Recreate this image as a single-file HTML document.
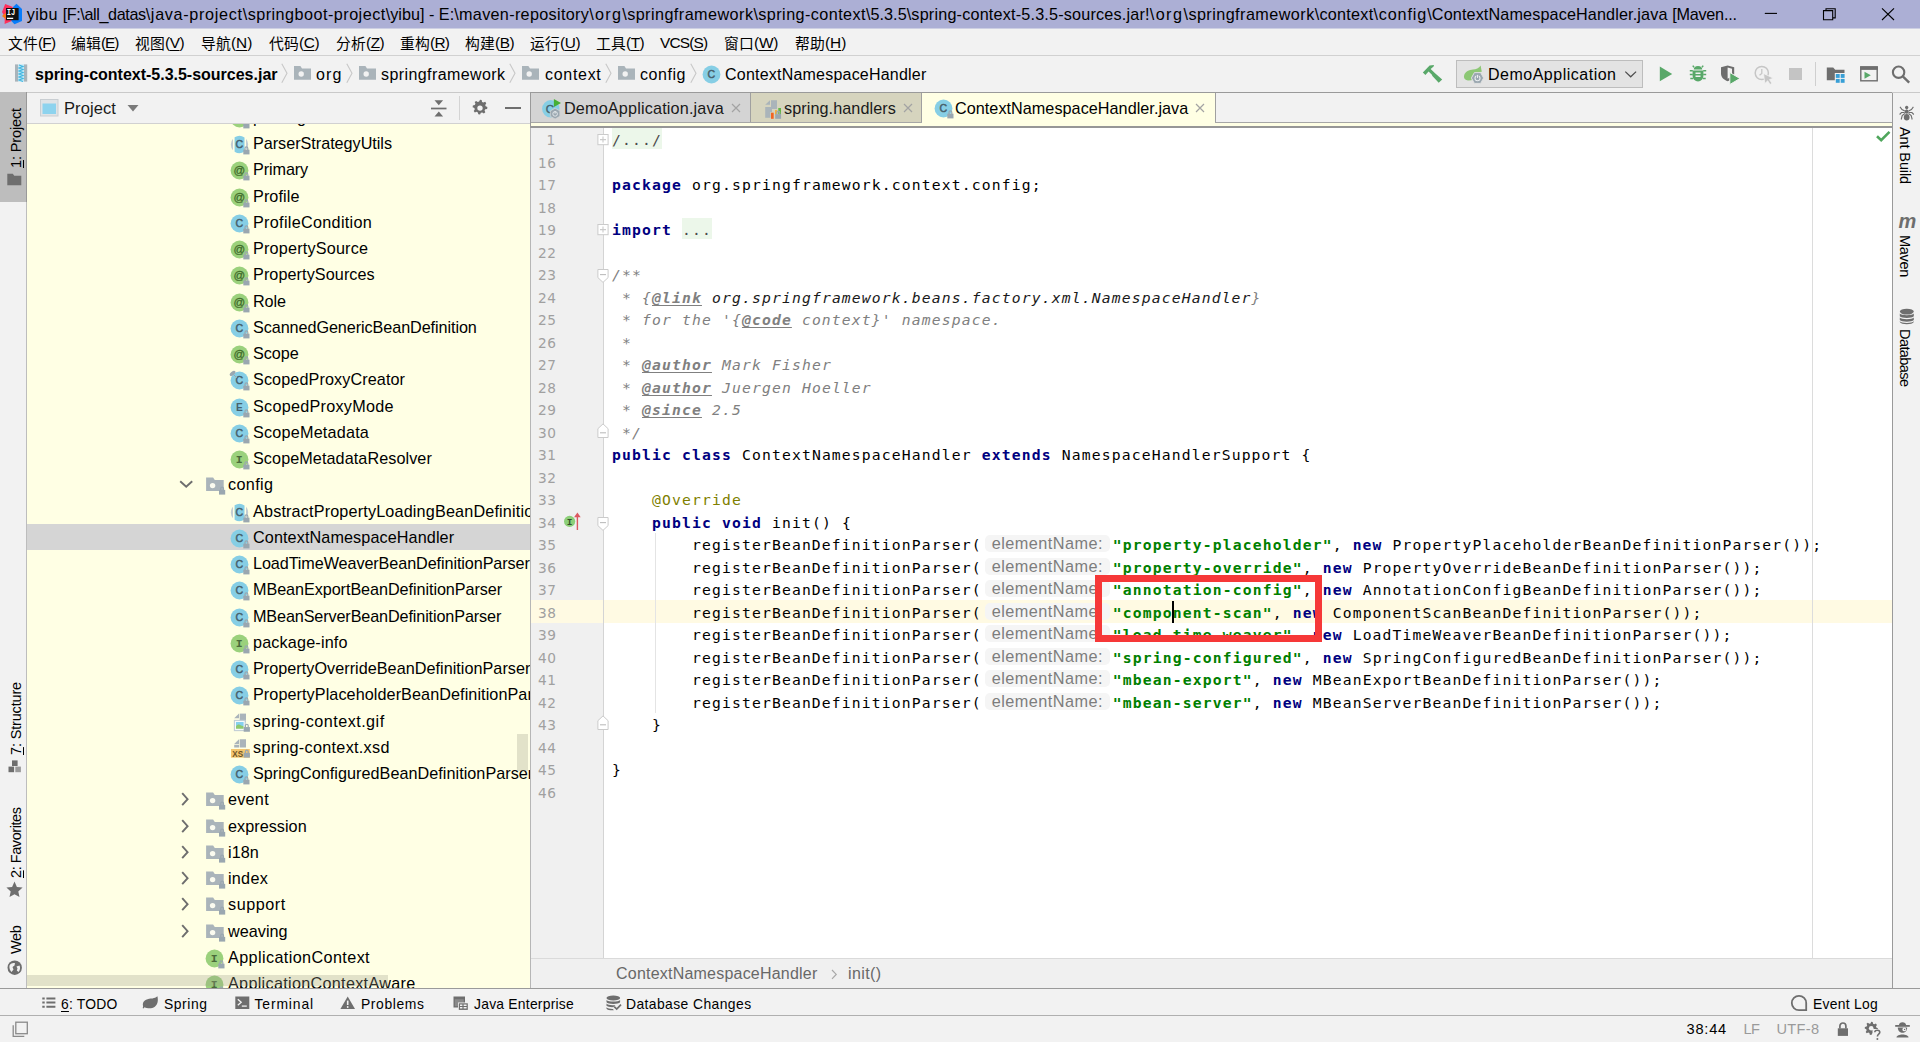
<!DOCTYPE html>
<html lang="zh"><head><meta charset="utf-8"><title>yibu - ContextNamespaceHandler.java</title>
<style>
html,body{margin:0;padding:0;background:#f2f2f2;}
body{width:1920px;height:1042px;overflow:hidden;font-family:"Liberation Sans","Noto Sans CJK SC",sans-serif;font-size:16px;color:#000;}
#app{position:relative;width:1920px;height:1042px;overflow:hidden;background:#f2f2f2;}
#app div,#app svg,#app span.t{position:absolute;}
span.t{white-space:pre;}
u{text-decoration:underline;text-underline-offset:2px;}
.clip{overflow:hidden;}
.c{font-family:"DejaVu Sans Mono","Liberation Mono",monospace;font-size:14.7px;letter-spacing:1.151px;line-height:23px;color:#000;}
.c b{font-weight:700;}
.k{color:#000080;}
.s{color:#008000;}
.a{color:#808000;}
.d{color:#808080;font-style:italic;}
.dt{text-decoration:underline;text-underline-offset:2px;}
.dl{color:#1a1a1a;}
.f{background:#ecf7ea;color:#4a4a4a;padding:3.4px 0 1.2px;}
.h{display:inline-block;font-style:normal;font-family:"Liberation Sans",sans-serif;font-size:16.3px;letter-spacing:0.45px;color:#7d7d7d;background:#f5f5f5;border-radius:5px;width:125px;height:17.5px;line-height:17.5px;margin:0 3px 0 3px;text-align:center;vertical-align:1.5px;text-indent:0;}
#app svg{overflow:visible;}

</style></head>
<body>
<div id="app">
<div style="left:0px;top:0px;width:1920px;height:29px;background:#acafd5;"></div>
<div style="left:0px;top:28px;width:1920px;height:1px;background:#cdcfe3;"></div>
<div style="left:0px;top:29px;width:1920px;height:26px;background:#f2f2f2;"></div>
<div style="left:0px;top:55px;width:1920px;height:1px;background:#d1d1d1;"></div>
<div style="left:0px;top:56px;width:1920px;height:36px;background:#f2f2f2;"></div>
<div style="left:0px;top:92px;width:1920px;height:1px;background:#c9c9c9;"></div>
<div style="left:0px;top:93px;width:27px;height:895px;background:#f2f2f2;"></div>
<div style="left:0px;top:92px;width:27px;height:110px;background:#bdbdbd;"></div>
<div style="left:26px;top:93px;width:1px;height:895px;background:#bdbdbd;"></div>
<div style="left:26px;top:92px;width:1px;height:110px;background:#999;"></div>
<div style="left:27px;top:93px;width:503px;height:30px;background:#f2f2f2;"></div>
<div style="left:27px;top:123px;width:503px;height:1px;background:#d1d1d1;"></div>
<div style="left:27px;top:124px;width:503px;height:864px;background:#ffffe4;"></div>
<div style="left:530px;top:92px;width:1362px;height:1px;background:#9a9a9a;"></div>
<div style="left:530px;top:93px;width:1362px;height:29px;background:#f2f2f2;"></div>
<div style="left:530px;top:122px;width:1362px;height:1px;background:#a6a6a6;"></div>
<div style="left:530px;top:123px;width:1362px;height:3px;background:#ffffe4;"></div>
<div style="left:530px;top:126px;width:1362px;height:2px;background:#969696;"></div>
<div style="left:531px;top:128px;width:1361px;height:830px;background:#fff;"></div>
<div style="left:531px;top:128px;width:72px;height:830px;background:#f0f0f0;"></div>
<div style="left:603px;top:128px;width:1px;height:830px;background:#d4d4d4;"></div>
<div style="left:530px;top:92px;width:1px;height:36px;background:#9a9a9a;"></div>
<div style="left:530px;top:128px;width:1px;height:860px;background:#b6b6b6;"></div>
<div style="left:1812px;top:128px;width:1px;height:830px;background:#dcdcdc;"></div>
<div style="left:531px;top:958px;width:1361px;height:30px;background:#f0f0f0;"></div>
<div style="left:531px;top:958px;width:1361px;height:1px;background:#dadada;"></div>
<div style="left:1892px;top:93px;width:28px;height:895px;background:#f2f2f2;"></div>
<div style="left:1892px;top:93px;width:1px;height:895px;background:#9a9a9a;"></div>
<div style="left:0px;top:988px;width:1920px;height:1px;background:#9a9a9a;"></div>
<div style="left:0px;top:989px;width:1920px;height:26px;background:#f2f2f2;"></div>
<div style="left:0px;top:1015px;width:1920px;height:1px;background:#b0b0b0;"></div>
<div style="left:0px;top:1016px;width:1920px;height:26px;background:#f2f2f2;"></div>
<span class="t" style="left:26.7px;top:5px;line-height:18px;font-size:16.2px;letter-spacing:0.359px;">yibu </span>
<span class="t" style="left:62.7px;top:5px;line-height:18px;font-size:16.2px;letter-spacing:-0.399px;">[F:\all_datas</span>
<span class="t" style="left:145.7px;top:5px;line-height:18px;font-size:16.2px;letter-spacing:0.679px;">\java-project</span>
<span class="t" style="left:242.7px;top:5px;line-height:18px;font-size:16.2px;letter-spacing:0.470px;">\springboot-project</span>
<span class="t" style="left:385.7px;top:5px;line-height:18px;font-size:16.2px;letter-spacing:0.011px;">\yibu] - E:</span>
<span class="t" style="left:454.2px;top:5px;line-height:18px;font-size:16.2px;letter-spacing:0.320px;">\maven-repository</span>
<span class="t" style="left:589.2px;top:5px;line-height:18px;font-size:16.2px;letter-spacing:1.273px;">\org</span>
<span class="t" style="left:622.2px;top:5px;line-height:18px;font-size:16.2px;letter-spacing:0.443px;">\springframework</span>
<span class="t" style="left:753.45px;top:5px;line-height:18px;font-size:16.2px;letter-spacing:0.422px;">\spring-context</span>
<span class="t" style="left:865.95px;top:5px;line-height:18px;font-size:16.2px;letter-spacing:0.039px;">\5.3.5</span>
<span class="t" style="left:906.7px;top:5px;line-height:18px;font-size:16.2px;letter-spacing:0.188px;">\spring-context-5.3.5-sources.jar!</span>
<span class="t" style="left:1149.7px;top:5px;line-height:18px;font-size:16.2px;letter-spacing:1.461px;">\org</span>
<span class="t" style="left:1183.45px;top:5px;line-height:18px;font-size:16.2px;letter-spacing:0.443px;">\springframework</span>
<span class="t" style="left:1314.7px;top:5px;line-height:18px;font-size:16.2px;letter-spacing:0.256px;">\context</span>
<span class="t" style="left:1373.45px;top:5px;line-height:18px;font-size:16.2px;letter-spacing:0.864px;">\config</span>
<span class="t" style="left:1427.2px;top:5px;line-height:18px;font-size:16.2px;letter-spacing:0.128px;">\ContextNamespaceHandler.java </span>
<span class="t" style="left:1672.2px;top:5px;line-height:18px;font-size:16.2px;letter-spacing:-0.231px;">[Maven...</span>
<svg style="left:0px;top:0px;" width="26" height="28" viewBox="0 0 26 28"><path d="M5.200 4L12.800 7L11.800 21L4.600 24L4.800 17L2 12z" fill="#fe315d"/><path d="M2 16L5.800 12.800V19.200z" fill="#f97a12"/><path d="M16.500 3.800L22 9V21L14.500 24.300L11.300 21L13 7z" fill="#087cfa"/><rect x="6" y="8" width="12.600" height="12.200" fill="#111"/><text x="6.800" y="15" font-family="Liberation Mono,monospace" font-size="8.500" font-weight="700" fill="#fff" textLength="8.500" lengthAdjust="spacingAndGlyphs">IJ</text><rect x="7" y="17.700" width="6.200" height="1.300" fill="#fff"/></svg>
<svg style="left:1760px;top:5px;" width="22" height="18" viewBox="0 0 22 18"><path d="M4.800 8.400H17" stroke="#000" stroke-width="1.100"/></svg>
<svg style="left:1820px;top:5px;" width="20" height="18" viewBox="0 0 20 18"><path d="M3.500 5.600h9.200v9.200h-9.200z M6 5.600V3.700h9.200v9.200h-2.500" fill="none" stroke="#000" stroke-width="1.100"/></svg>
<svg style="left:1878px;top:5px;" width="20" height="18" viewBox="0 0 20 18"><path d="M4 3.300L16 15M16 3.300L4 15" stroke="#000" stroke-width="1.100"/></svg>
<span class="t" style="left:8px;top:34px;line-height:17px;font-size:15.4px;letter-spacing:-0.822px"><span style="font-size:14.8px;letter-spacing:0.2px;position:relative;top:1px">文件</span>(<u>F</u>)</span>
<span class="t" style="left:71px;top:34px;line-height:17px;font-size:15.4px;letter-spacing:-1.114px"><span style="font-size:14.8px;letter-spacing:0.2px;position:relative;top:1px">编辑</span>(<u>E</u>)</span>
<span class="t" style="left:135px;top:34px;line-height:17px;font-size:15.4px;letter-spacing:-0.447px"><span style="font-size:14.8px;letter-spacing:0.2px;position:relative;top:1px">视图</span>(<u>V</u>)</span>
<span class="t" style="left:201px;top:34px;line-height:17px;font-size:15.4px;letter-spacing:-0.061px"><span style="font-size:14.8px;letter-spacing:0.2px;position:relative;top:1px">导航</span>(<u>N</u>)</span>
<span class="t" style="left:269px;top:34px;line-height:17px;font-size:15.4px;letter-spacing:-0.395px"><span style="font-size:14.8px;letter-spacing:0.2px;position:relative;top:1px">代码</span>(<u>C</u>)</span>
<span class="t" style="left:336px;top:34px;line-height:17px;font-size:15.4px;letter-spacing:-0.489px"><span style="font-size:14.8px;letter-spacing:0.2px;position:relative;top:1px">分析</span>(<u>Z</u>)</span>
<span class="t" style="left:400px;top:34px;line-height:17px;font-size:15.4px;letter-spacing:-0.728px"><span style="font-size:14.8px;letter-spacing:0.2px;position:relative;top:1px">重构</span>(<u>R</u>)</span>
<span class="t" style="left:465px;top:34px;line-height:17px;font-size:15.4px;letter-spacing:-0.447px"><span style="font-size:14.8px;letter-spacing:0.2px;position:relative;top:1px">构建</span>(<u>B</u>)</span>
<span class="t" style="left:530px;top:34px;line-height:17px;font-size:15.4px;letter-spacing:-0.395px"><span style="font-size:14.8px;letter-spacing:0.2px;position:relative;top:1px">运行</span>(<u>U</u>)</span>
<span class="t" style="left:596px;top:34px;line-height:17px;font-size:15.4px;letter-spacing:-0.489px"><span style="font-size:14.8px;letter-spacing:0.2px;position:relative;top:1px">工具</span>(<u>T</u>)</span>
<span class="t" style="left:660px;top:34px;line-height:17px;font-size:15.4px;letter-spacing:-0.831px">VCS(<u>S</u>)</span>
<span class="t" style="left:724px;top:34px;line-height:17px;font-size:15.4px;letter-spacing:-0.197px"><span style="font-size:14.8px;letter-spacing:0.2px;position:relative;top:1px">窗口</span>(<u>W</u>)</span>
<span class="t" style="left:795px;top:34px;line-height:17px;font-size:15.4px;letter-spacing:-0.061px"><span style="font-size:14.8px;letter-spacing:0.2px;position:relative;top:1px">帮助</span>(<u>H</u>)</span>
<span class="t" style="left:35px;top:66px;line-height:17px;font-size:16px;letter-spacing:-0.008px;font-weight:700;">spring-context-5.3.5-sources.jar</span>
<span class="t" style="left:316px;top:66px;line-height:17px;font-size:16px;letter-spacing:1.125px;">org</span>
<span class="t" style="left:381px;top:66px;line-height:17px;font-size:16px;letter-spacing:0.416px;">springframework</span>
<span class="t" style="left:545px;top:66px;line-height:17px;font-size:16px;letter-spacing:0.701px;">context</span>
<span class="t" style="left:640px;top:66px;line-height:17px;font-size:16px;letter-spacing:0.549px;">config</span>
<span class="t" style="left:725px;top:66px;line-height:17px;font-size:16px;letter-spacing:0.215px;">ContextNamespaceHandler</span>

<svg style="left:40px;top:99px;" width="19" height="18" viewBox="0 0 19 18"><rect x="0.5" y="0.5" width="17.5" height="16.5" fill="#dfe3e6" stroke="#c9ced2"/><rect x="2.5" y="4.5" width="13.5" height="10.5" fill="#8dd3ee"/></svg>
<span class="t" style="left:64px;top:99px;line-height:18px;font-size:16.5px;letter-spacing:0.092px;color:#1a1a1a;">Project</span>
<svg style="left:127px;top:104px;" width="12" height="8" viewBox="0 0 12 8"><path d="M0.5 1h11L6 7.5z" fill="#7a7a7a"/></svg>
<svg style="left:430px;top:98px;" width="18" height="20" viewBox="0 0 18 20"><path d="M1 10.5H16.5" stroke="#6e6e6e" stroke-width="1.7"/><path d="M4.5 2.2h8.6L8.8 7.2z M4.5 18.6h8.6L8.8 13.6z" fill="#6e6e6e"/></svg>
<div style="left:459px;top:96px;width:1px;height:24px;background:#d4d4d4;"></div>
<svg style="left:470px;top:98px;" width="20" height="20" viewBox="0 0 20 20"><path d="M10 1.6l1.9.3.5 2.2 1.5.8 2.1-.9 1.3 1.7-1.2 1.9.4 1.6 2.1.9-.3 2.1-2.2.5-.8 1.5.9 2-1.7 1.3-1.9-1.2-1.6.4-.9 2.1-2.1-.3-.5-2.2-1.5-.8-2 .9-1.300-1.7 1.2-1.9-.4-1.600-2.100-.9.3-2.100 2.200-.5.8-1.500-.9-2 1.700-1.300 1.900 1.200 1.600-.4z" fill="#6e6e6e" transform="translate(1.400,0.400) scale(0.860)"/><circle cx="10" cy="10.100" r="2.700" fill="#f2f2f2"/></svg>
<div style="left:505px;top:107px;width:16px;height:2px;background:#6e6e6e;"></div>
<div class="clip" style="left:27px;top:124px;width:503px;height:864px">
<div style="left:0px;top:400px;width:503px;height:26.25px;background:#d5d5d5;"></div>
<svg style="left:204.4px;top:-14.50px" width="20" height="20"><circle cx="8.500" cy="8.500" r="8.900" fill="#9bd17c"/><text x="8.300" y="12.300" text-anchor="middle" font-family="Liberation Mono,monospace" font-size="11.500" font-weight="700" fill="#4a6a3a">I</text><g transform="translate(12.300,9.800)"><path d="M1.700 4.200V2.500a1.400 1.400 0 0 1 2.800 0V4.200" fill="none" stroke="#9aa7b0" stroke-width="1.200"/><rect x="0" y="3.900" width="6.200" height="4.700" fill="#9aa7b0"/></g></svg>
<span class="t" style="left:226px;top:-16px;line-height:18px;font-size:16.2px;letter-spacing:0.166px;">package-info</span>
<svg style="left:204.4px;top:11.50px" width="20" height="20"><path d="M2 2.720A8.700 8.700 0 0 0 2 14.280z M15 2.720A8.700 8.700 0 0 1 15 14.280z" fill="#c4cdd2"/><path d="M3.600 1.310A8.700 8.700 0 0 1 13.500 1.380V15.620A8.700 8.700 0 0 1 3.600 15.690z" fill="#86cee5"/><text x="8.300" y="12.200" text-anchor="middle" font-family="Liberation Sans,sans-serif" font-size="10.600" font-weight="400" stroke="#46606b" stroke-width="0.450" fill="#46606b">C</text><g transform="translate(12.300,9.800)"><path d="M1.700 4.200V2.500a1.400 1.400 0 0 1 2.800 0V4.200" fill="none" stroke="#9aa7b0" stroke-width="1.200"/><rect x="0" y="3.900" width="6.200" height="4.700" fill="#9aa7b0"/></g></svg>
<span class="t" style="left:226px;top:10px;line-height:18px;font-size:16.2px;letter-spacing:-0.023px;">ParserStrategyUtils</span>
<svg style="left:204.4px;top:37.50px" width="20" height="20"><circle cx="8.500" cy="8.500" r="8.900" fill="#9bd17c"/><text x="8.300" y="11.700" text-anchor="middle" font-family="Liberation Sans,sans-serif" font-size="11.500" font-weight="400" stroke="#3f6b2a" stroke-width="0.300" fill="#3f6b2a">@</text><g transform="translate(12.300,9.800)"><path d="M1.700 4.200V2.500a1.400 1.400 0 0 1 2.800 0V4.200" fill="none" stroke="#9aa7b0" stroke-width="1.200"/><rect x="0" y="3.900" width="6.200" height="4.700" fill="#9aa7b0"/></g></svg>
<span class="t" style="left:226px;top:36px;line-height:18px;font-size:16.2px;letter-spacing:-0.095px;">Primary</span>
<svg style="left:204.4px;top:64.50px" width="20" height="20"><circle cx="8.500" cy="8.500" r="8.900" fill="#9bd17c"/><text x="8.300" y="11.700" text-anchor="middle" font-family="Liberation Sans,sans-serif" font-size="11.500" font-weight="400" stroke="#3f6b2a" stroke-width="0.300" fill="#3f6b2a">@</text><g transform="translate(12.300,9.800)"><path d="M1.700 4.200V2.500a1.400 1.400 0 0 1 2.800 0V4.200" fill="none" stroke="#9aa7b0" stroke-width="1.200"/><rect x="0" y="3.900" width="6.200" height="4.700" fill="#9aa7b0"/></g></svg>
<span class="t" style="left:226px;top:63px;line-height:18px;font-size:16.2px;letter-spacing:0.087px;">Profile</span>
<svg style="left:204.4px;top:90.50px" width="20" height="20"><circle cx="8.500" cy="8.500" r="8.900" fill="#86cee5"/><text x="8.300" y="12.200" text-anchor="middle" font-family="Liberation Sans,sans-serif" font-size="10.600" font-weight="400" stroke="#46606b" stroke-width="0.450" fill="#46606b">C</text><g transform="translate(12.300,9.800)"><path d="M1.700 4.200V2.500a1.400 1.400 0 0 1 2.800 0V4.200" fill="none" stroke="#9aa7b0" stroke-width="1.200"/><rect x="0" y="3.900" width="6.200" height="4.700" fill="#9aa7b0"/></g></svg>
<span class="t" style="left:226px;top:89px;line-height:18px;font-size:16.2px;letter-spacing:0.301px;">ProfileCondition</span>
<svg style="left:204.4px;top:116.50px" width="20" height="20"><circle cx="8.500" cy="8.500" r="8.900" fill="#9bd17c"/><text x="8.300" y="11.700" text-anchor="middle" font-family="Liberation Sans,sans-serif" font-size="11.500" font-weight="400" stroke="#3f6b2a" stroke-width="0.300" fill="#3f6b2a">@</text><g transform="translate(12.300,9.800)"><path d="M1.700 4.200V2.500a1.400 1.400 0 0 1 2.800 0V4.200" fill="none" stroke="#9aa7b0" stroke-width="1.200"/><rect x="0" y="3.900" width="6.200" height="4.700" fill="#9aa7b0"/></g></svg>
<span class="t" style="left:226px;top:115px;line-height:18px;font-size:16.2px;letter-spacing:0.195px;">PropertySource</span>
<svg style="left:204.4px;top:142.50px" width="20" height="20"><circle cx="8.500" cy="8.500" r="8.900" fill="#9bd17c"/><text x="8.300" y="11.700" text-anchor="middle" font-family="Liberation Sans,sans-serif" font-size="11.500" font-weight="400" stroke="#3f6b2a" stroke-width="0.300" fill="#3f6b2a">@</text><g transform="translate(12.300,9.800)"><path d="M1.700 4.200V2.500a1.400 1.400 0 0 1 2.800 0V4.200" fill="none" stroke="#9aa7b0" stroke-width="1.200"/><rect x="0" y="3.900" width="6.200" height="4.700" fill="#9aa7b0"/></g></svg>
<span class="t" style="left:226px;top:141px;line-height:18px;font-size:16.2px;letter-spacing:0.082px;">PropertySources</span>
<svg style="left:204.4px;top:169.50px" width="20" height="20"><circle cx="8.500" cy="8.500" r="8.900" fill="#9bd17c"/><text x="8.300" y="11.700" text-anchor="middle" font-family="Liberation Sans,sans-serif" font-size="11.500" font-weight="400" stroke="#3f6b2a" stroke-width="0.300" fill="#3f6b2a">@</text><g transform="translate(12.300,9.800)"><path d="M1.700 4.200V2.500a1.400 1.400 0 0 1 2.800 0V4.200" fill="none" stroke="#9aa7b0" stroke-width="1.200"/><rect x="0" y="3.900" width="6.200" height="4.700" fill="#9aa7b0"/></g></svg>
<span class="t" style="left:226px;top:168px;line-height:18px;font-size:16.2px;letter-spacing:-0.124px;">Role</span>
<svg style="left:204.4px;top:195.50px" width="20" height="20"><circle cx="8.500" cy="8.500" r="8.900" fill="#86cee5"/><text x="8.300" y="12.200" text-anchor="middle" font-family="Liberation Sans,sans-serif" font-size="10.600" font-weight="400" stroke="#46606b" stroke-width="0.450" fill="#46606b">C</text><g transform="translate(12.300,9.800)"><path d="M1.700 4.200V2.500a1.400 1.400 0 0 1 2.800 0V4.200" fill="none" stroke="#9aa7b0" stroke-width="1.200"/><rect x="0" y="3.900" width="6.200" height="4.700" fill="#9aa7b0"/></g></svg>
<span class="t" style="left:226px;top:194px;line-height:18px;font-size:16.2px;letter-spacing:-0.074px;">ScannedGenericBeanDefinition</span>
<svg style="left:204.4px;top:221.50px" width="20" height="20"><circle cx="8.500" cy="8.500" r="8.900" fill="#9bd17c"/><text x="8.300" y="11.700" text-anchor="middle" font-family="Liberation Sans,sans-serif" font-size="11.500" font-weight="400" stroke="#3f6b2a" stroke-width="0.300" fill="#3f6b2a">@</text><g transform="translate(12.300,9.800)"><path d="M1.700 4.200V2.500a1.400 1.400 0 0 1 2.800 0V4.200" fill="none" stroke="#9aa7b0" stroke-width="1.200"/><rect x="0" y="3.900" width="6.200" height="4.700" fill="#9aa7b0"/></g></svg>
<span class="t" style="left:226px;top:220px;line-height:18px;font-size:16.2px;letter-spacing:-0.061px;">Scope</span>
<svg style="left:204.4px;top:247.50px" width="20" height="20"><circle cx="8.500" cy="8.500" r="8.900" fill="#86cee5"/><text x="8.300" y="12.200" text-anchor="middle" font-family="Liberation Sans,sans-serif" font-size="10.600" font-weight="400" stroke="#46606b" stroke-width="0.450" fill="#46606b">C</text><g transform="translate(12.300,9.800)"><path d="M1.700 4.200V2.500a1.400 1.400 0 0 1 2.800 0V4.200" fill="none" stroke="#9aa7b0" stroke-width="1.200"/><rect x="0" y="3.900" width="6.200" height="4.700" fill="#9aa7b0"/></g></svg>
<svg style="left:202.4px;top:245.50px" width="10" height="10"><ellipse cx="3.600" cy="3.400" rx="3.400" ry="1.800" transform="rotate(-40 3.600 3.400)" fill="#9aa7b0"/><path d="M5 5L8 8" stroke="#9aa7b0" stroke-width="1"/></svg>
<span class="t" style="left:226px;top:246px;line-height:18px;font-size:16.2px;letter-spacing:0.102px;">ScopedProxyCreator</span>
<svg style="left:204.4px;top:274.50px" width="20" height="20"><circle cx="8.500" cy="8.500" r="8.900" fill="#86cee5"/><text x="8.300" y="12.100" text-anchor="middle" font-family="Liberation Sans,sans-serif" font-size="10.200" font-weight="700" fill="#46606b">E</text><g transform="translate(12.300,9.800)"><path d="M1.700 4.200V2.500a1.400 1.400 0 0 1 2.800 0V4.200" fill="none" stroke="#9aa7b0" stroke-width="1.200"/><rect x="0" y="3.900" width="6.200" height="4.700" fill="#9aa7b0"/></g></svg>
<span class="t" style="left:226px;top:273px;line-height:18px;font-size:16.2px;letter-spacing:0.268px;">ScopedProxyMode</span>
<svg style="left:204.4px;top:300.50px" width="20" height="20"><circle cx="8.500" cy="8.500" r="8.900" fill="#86cee5"/><text x="8.300" y="12.200" text-anchor="middle" font-family="Liberation Sans,sans-serif" font-size="10.600" font-weight="400" stroke="#46606b" stroke-width="0.450" fill="#46606b">C</text><g transform="translate(12.300,9.800)"><path d="M1.700 4.200V2.500a1.400 1.400 0 0 1 2.800 0V4.200" fill="none" stroke="#9aa7b0" stroke-width="1.200"/><rect x="0" y="3.900" width="6.200" height="4.700" fill="#9aa7b0"/></g></svg>
<span class="t" style="left:226px;top:299px;line-height:18px;font-size:16.2px;letter-spacing:0.207px;">ScopeMetadata</span>
<svg style="left:204.4px;top:326.50px" width="20" height="20"><circle cx="8.500" cy="8.500" r="8.900" fill="#9bd17c"/><text x="8.300" y="12.300" text-anchor="middle" font-family="Liberation Mono,monospace" font-size="11.500" font-weight="700" fill="#4a6a3a">I</text><g transform="translate(12.300,9.800)"><path d="M1.700 4.200V2.500a1.400 1.400 0 0 1 2.800 0V4.200" fill="none" stroke="#9aa7b0" stroke-width="1.200"/><rect x="0" y="3.900" width="6.200" height="4.700" fill="#9aa7b0"/></g></svg>
<span class="t" style="left:226px;top:325px;line-height:18px;font-size:16.2px;letter-spacing:0.078px;">ScopeMetadataResolver</span>
<svg style="left:179px;top:352.00px" width="20" height="20"><path d="M0.100 1.500h7l1.700 2.400H17.700V15H0.100z" fill="#aab4ba"/><circle cx="6.600" cy="9.600" r="2.700" fill="#fbfbf0"/><g transform="translate(13,10)"><path d="M1.700 4.200V2.500a1.400 1.400 0 0 1 2.800 0V4.200" fill="none" stroke="#9aa7b0" stroke-width="1.200"/><rect x="0" y="3.900" width="6.200" height="4.700" fill="#9aa7b0"/></g></svg>
<svg style="left:152px;top:356.10px" width="15" height="9"><path d="M1.2 1.2L7.2 6.8L13.2 1.2" fill="none" stroke="#6e6e6e" stroke-width="1.9"/></svg>
<span class="t" style="left:201px;top:351px;line-height:18px;font-size:16.2px;letter-spacing:0.349px;">config</span>
<svg style="left:204.4px;top:379.50px" width="20" height="20"><path d="M2 2.720A8.700 8.700 0 0 0 2 14.280z M15 2.720A8.700 8.700 0 0 1 15 14.280z" fill="#c4cdd2"/><path d="M3.600 1.310A8.700 8.700 0 0 1 13.500 1.380V15.620A8.700 8.700 0 0 1 3.600 15.690z" fill="#86cee5"/><text x="8.300" y="12.200" text-anchor="middle" font-family="Liberation Sans,sans-serif" font-size="10.600" font-weight="400" stroke="#46606b" stroke-width="0.450" fill="#46606b">C</text><g transform="translate(12.300,9.800)"><path d="M1.700 4.200V2.500a1.400 1.400 0 0 1 2.800 0V4.200" fill="none" stroke="#9aa7b0" stroke-width="1.200"/><rect x="0" y="3.900" width="6.200" height="4.700" fill="#9aa7b0"/></g></svg>
<span class="t" style="left:226px;top:378px;line-height:18px;font-size:16.2px;letter-spacing:0.164px;">AbstractPropertyLoadingBeanDefinitionParser</span>
<svg style="left:204.4px;top:405.50px" width="20" height="20"><circle cx="8.500" cy="8.500" r="8.900" fill="#86cee5"/><text x="8.300" y="12.200" text-anchor="middle" font-family="Liberation Sans,sans-serif" font-size="10.600" font-weight="400" stroke="#46606b" stroke-width="0.450" fill="#46606b">C</text><g transform="translate(12.300,9.800)"><path d="M1.700 4.200V2.500a1.400 1.400 0 0 1 2.800 0V4.200" fill="none" stroke="#9aa7b0" stroke-width="1.200"/><rect x="0" y="3.900" width="6.200" height="4.700" fill="#9aa7b0"/></g></svg>
<span class="t" style="left:226px;top:404px;line-height:18px;font-size:16.2px;letter-spacing:0.102px;">ContextNamespaceHandler</span>
<svg style="left:204.4px;top:431.50px" width="20" height="20"><circle cx="8.500" cy="8.500" r="8.900" fill="#86cee5"/><text x="8.300" y="12.200" text-anchor="middle" font-family="Liberation Sans,sans-serif" font-size="10.600" font-weight="400" stroke="#46606b" stroke-width="0.450" fill="#46606b">C</text><g transform="translate(12.300,9.800)"><path d="M1.700 4.200V2.500a1.400 1.400 0 0 1 2.800 0V4.200" fill="none" stroke="#9aa7b0" stroke-width="1.200"/><rect x="0" y="3.900" width="6.200" height="4.700" fill="#9aa7b0"/></g></svg>
<span class="t" style="left:226px;top:430px;line-height:18px;font-size:16.2px;letter-spacing:-0.089px;">LoadTimeWeaverBeanDefinitionParser</span>
<svg style="left:204.4px;top:457.50px" width="20" height="20"><circle cx="8.500" cy="8.500" r="8.900" fill="#86cee5"/><text x="8.300" y="12.200" text-anchor="middle" font-family="Liberation Sans,sans-serif" font-size="10.600" font-weight="400" stroke="#46606b" stroke-width="0.450" fill="#46606b">C</text><g transform="translate(12.300,9.800)"><path d="M1.700 4.200V2.500a1.400 1.400 0 0 1 2.800 0V4.200" fill="none" stroke="#9aa7b0" stroke-width="1.200"/><rect x="0" y="3.900" width="6.200" height="4.700" fill="#9aa7b0"/></g></svg>
<span class="t" style="left:226px;top:456px;line-height:18px;font-size:16.2px;letter-spacing:-0.063px;">MBeanExportBeanDefinitionParser</span>
<svg style="left:204.4px;top:484.50px" width="20" height="20"><circle cx="8.500" cy="8.500" r="8.900" fill="#86cee5"/><text x="8.300" y="12.200" text-anchor="middle" font-family="Liberation Sans,sans-serif" font-size="10.600" font-weight="400" stroke="#46606b" stroke-width="0.450" fill="#46606b">C</text><g transform="translate(12.300,9.800)"><path d="M1.700 4.200V2.500a1.400 1.400 0 0 1 2.800 0V4.200" fill="none" stroke="#9aa7b0" stroke-width="1.200"/><rect x="0" y="3.900" width="6.200" height="4.700" fill="#9aa7b0"/></g></svg>
<span class="t" style="left:226px;top:483px;line-height:18px;font-size:16.2px;letter-spacing:-0.121px;">MBeanServerBeanDefinitionParser</span>
<svg style="left:204.4px;top:510.50px" width="20" height="20"><circle cx="8.500" cy="8.500" r="8.900" fill="#9bd17c"/><text x="8.300" y="12.300" text-anchor="middle" font-family="Liberation Mono,monospace" font-size="11.500" font-weight="700" fill="#4a6a3a">I</text><g transform="translate(12.300,9.800)"><path d="M1.700 4.200V2.500a1.400 1.400 0 0 1 2.800 0V4.200" fill="none" stroke="#9aa7b0" stroke-width="1.200"/><rect x="0" y="3.900" width="6.200" height="4.700" fill="#9aa7b0"/></g></svg>
<span class="t" style="left:226px;top:509px;line-height:18px;font-size:16.2px;letter-spacing:0.166px;">package-info</span>
<svg style="left:204.4px;top:536.50px" width="20" height="20"><circle cx="8.500" cy="8.500" r="8.900" fill="#86cee5"/><text x="8.300" y="12.200" text-anchor="middle" font-family="Liberation Sans,sans-serif" font-size="10.600" font-weight="400" stroke="#46606b" stroke-width="0.450" fill="#46606b">C</text><g transform="translate(12.300,9.800)"><path d="M1.700 4.200V2.500a1.400 1.400 0 0 1 2.800 0V4.200" fill="none" stroke="#9aa7b0" stroke-width="1.200"/><rect x="0" y="3.900" width="6.200" height="4.700" fill="#9aa7b0"/></g></svg>
<span class="t" style="left:226px;top:535px;line-height:18px;font-size:16.2px;letter-spacing:0.033px;">PropertyOverrideBeanDefinitionParser</span>
<svg style="left:204.4px;top:562.50px" width="20" height="20"><circle cx="8.500" cy="8.500" r="8.900" fill="#86cee5"/><text x="8.300" y="12.200" text-anchor="middle" font-family="Liberation Sans,sans-serif" font-size="10.600" font-weight="400" stroke="#46606b" stroke-width="0.450" fill="#46606b">C</text><g transform="translate(12.300,9.800)"><path d="M1.700 4.200V2.500a1.400 1.400 0 0 1 2.800 0V4.200" fill="none" stroke="#9aa7b0" stroke-width="1.200"/><rect x="0" y="3.900" width="6.200" height="4.700" fill="#9aa7b0"/></g></svg>
<span class="t" style="left:226px;top:561px;line-height:18px;font-size:16.2px;letter-spacing:0.076px;">PropertyPlaceholderBeanDefinitionParser</span>
<svg style="left:204px;top:588.10px" width="20" height="21"><path d="M8 1.600V6.300H3.200z" fill="#aab4ba"/><path d="M8.700 1.600H15V10.500H8.700z" fill="#aab4ba"/><rect x="3.400" y="8.400" width="10.800" height="10.200" fill="#f7fafb" stroke="#c3ced4" stroke-width="1.100"/><rect x="5" y="10" width="7.600" height="4.200" fill="#86d0ee"/><path d="M5 16.800V14.300C6.500 12.200 8.500 12.200 10 13.600L12.600 14.300V16.800z" fill="#8fc96f"/><g transform="translate(12.700,11.150)"><path d="M1.700 4.200V2.500a1.400 1.400 0 0 1 2.800 0V4.200" fill="none" stroke="#9aa7b0" stroke-width="1.200"/><rect x="0" y="3.900" width="6.200" height="4.700" fill="#9aa7b0"/></g></svg>
<span class="t" style="left:226px;top:588px;line-height:18px;font-size:16.2px;letter-spacing:0.463px;">spring-context.gif</span>
<svg style="left:204px;top:614.10px" width="20" height="21"><path d="M8 1.300V6H3.200z" fill="#aab4ba"/><path d="M8.700 1.300H15V9.600H8.700z M3.200 6.700H8V9.600H3.200z" fill="#aab4ba"/><rect x="0" y="11" width="18.800" height="8.700" fill="#f4c66f"/><text x="1.300" y="18.800" font-family="Liberation Sans,sans-serif" font-size="9.500" font-weight="700" fill="#6b5327" textLength="10.800" lengthAdjust="spacingAndGlyphs">XS</text><g transform="translate(12.700,11)"><path d="M1.700 4.200V2.500a1.400 1.400 0 0 1 2.800 0V4.200" fill="none" stroke="#9aa7b0" stroke-width="1.200"/><rect x="0" y="3.900" width="6.200" height="4.700" fill="#9aa7b0"/></g></svg>
<span class="t" style="left:226px;top:614px;line-height:18px;font-size:16.2px;letter-spacing:0.297px;">spring-context.xsd</span>
<svg style="left:204.4px;top:641.50px" width="20" height="20"><circle cx="8.500" cy="8.500" r="8.900" fill="#86cee5"/><text x="8.300" y="12.200" text-anchor="middle" font-family="Liberation Sans,sans-serif" font-size="10.600" font-weight="400" stroke="#46606b" stroke-width="0.450" fill="#46606b">C</text><g transform="translate(12.300,9.800)"><path d="M1.700 4.200V2.500a1.400 1.400 0 0 1 2.800 0V4.200" fill="none" stroke="#9aa7b0" stroke-width="1.200"/><rect x="0" y="3.900" width="6.200" height="4.700" fill="#9aa7b0"/></g></svg>
<span class="t" style="left:226px;top:640px;line-height:18px;font-size:16.2px;letter-spacing:0.037px;">SpringConfiguredBeanDefinitionParser</span>
<svg style="left:179px;top:667.00px" width="20" height="20"><path d="M0.100 1.500h7l1.700 2.400H17.700V15H0.100z" fill="#aab4ba"/><circle cx="6.600" cy="9.600" r="2.700" fill="#fbfbf0"/><g transform="translate(13,10)"><path d="M1.700 4.200V2.500a1.400 1.400 0 0 1 2.800 0V4.200" fill="none" stroke="#9aa7b0" stroke-width="1.200"/><rect x="0" y="3.900" width="6.200" height="4.700" fill="#9aa7b0"/></g></svg>
<svg style="left:154px;top:667.50px" width="9" height="15"><path d="M1.2 1.2L6.6 7.2L1.2 13.2" fill="none" stroke="#6e6e6e" stroke-width="1.9"/></svg>
<span class="t" style="left:201px;top:666px;line-height:18px;font-size:16.2px;letter-spacing:0.258px;">event</span>
<svg style="left:179px;top:694.00px" width="20" height="20"><path d="M0.100 1.500h7l1.700 2.400H17.700V15H0.100z" fill="#aab4ba"/><circle cx="6.600" cy="9.600" r="2.700" fill="#fbfbf0"/><g transform="translate(13,10)"><path d="M1.700 4.200V2.500a1.400 1.400 0 0 1 2.800 0V4.200" fill="none" stroke="#9aa7b0" stroke-width="1.200"/><rect x="0" y="3.900" width="6.200" height="4.700" fill="#9aa7b0"/></g></svg>
<svg style="left:154px;top:694.50px" width="9" height="15"><path d="M1.2 1.2L6.6 7.2L1.2 13.2" fill="none" stroke="#6e6e6e" stroke-width="1.9"/></svg>
<span class="t" style="left:201px;top:693px;line-height:18px;font-size:16.2px;letter-spacing:0.040px;">expression</span>
<svg style="left:179px;top:720.00px" width="20" height="20"><path d="M0.100 1.500h7l1.700 2.400H17.700V15H0.100z" fill="#aab4ba"/><circle cx="6.600" cy="9.600" r="2.700" fill="#fbfbf0"/><g transform="translate(13,10)"><path d="M1.700 4.200V2.500a1.400 1.400 0 0 1 2.800 0V4.200" fill="none" stroke="#9aa7b0" stroke-width="1.200"/><rect x="0" y="3.900" width="6.200" height="4.700" fill="#9aa7b0"/></g></svg>
<svg style="left:154px;top:720.50px" width="9" height="15"><path d="M1.2 1.2L6.6 7.2L1.2 13.2" fill="none" stroke="#6e6e6e" stroke-width="1.9"/></svg>
<span class="t" style="left:201px;top:719px;line-height:18px;font-size:16.2px;letter-spacing:0.048px;">i18n</span>
<svg style="left:179px;top:746.00px" width="20" height="20"><path d="M0.100 1.500h7l1.700 2.400H17.700V15H0.100z" fill="#aab4ba"/><circle cx="6.600" cy="9.600" r="2.700" fill="#fbfbf0"/><g transform="translate(13,10)"><path d="M1.700 4.200V2.500a1.400 1.400 0 0 1 2.800 0V4.200" fill="none" stroke="#9aa7b0" stroke-width="1.200"/><rect x="0" y="3.900" width="6.200" height="4.700" fill="#9aa7b0"/></g></svg>
<svg style="left:154px;top:746.50px" width="9" height="15"><path d="M1.2 1.2L6.6 7.2L1.2 13.2" fill="none" stroke="#6e6e6e" stroke-width="1.9"/></svg>
<span class="t" style="left:201px;top:745px;line-height:18px;font-size:16.2px;letter-spacing:0.259px;">index</span>
<svg style="left:179px;top:772.00px" width="20" height="20"><path d="M0.100 1.500h7l1.700 2.400H17.700V15H0.100z" fill="#aab4ba"/><circle cx="6.600" cy="9.600" r="2.700" fill="#fbfbf0"/><g transform="translate(13,10)"><path d="M1.700 4.200V2.500a1.400 1.400 0 0 1 2.800 0V4.200" fill="none" stroke="#9aa7b0" stroke-width="1.200"/><rect x="0" y="3.900" width="6.200" height="4.700" fill="#9aa7b0"/></g></svg>
<svg style="left:154px;top:772.50px" width="9" height="15"><path d="M1.2 1.2L6.6 7.2L1.2 13.2" fill="none" stroke="#6e6e6e" stroke-width="1.9"/></svg>
<span class="t" style="left:201px;top:771px;line-height:18px;font-size:16.2px;letter-spacing:0.543px;">support</span>
<svg style="left:179px;top:799.00px" width="20" height="20"><path d="M0.100 1.500h7l1.700 2.400H17.700V15H0.100z" fill="#aab4ba"/><circle cx="6.600" cy="9.600" r="2.700" fill="#fbfbf0"/><g transform="translate(13,10)"><path d="M1.700 4.200V2.500a1.400 1.400 0 0 1 2.800 0V4.200" fill="none" stroke="#9aa7b0" stroke-width="1.200"/><rect x="0" y="3.900" width="6.200" height="4.700" fill="#9aa7b0"/></g></svg>
<svg style="left:154px;top:799.50px" width="9" height="15"><path d="M1.2 1.2L6.6 7.2L1.2 13.2" fill="none" stroke="#6e6e6e" stroke-width="1.9"/></svg>
<span class="t" style="left:201px;top:798px;line-height:18px;font-size:16.2px;letter-spacing:0.028px;">weaving</span>
<svg style="left:179px;top:825.50px" width="20" height="20"><circle cx="8.500" cy="8.500" r="8.900" fill="#9bd17c"/><text x="8.300" y="12.300" text-anchor="middle" font-family="Liberation Mono,monospace" font-size="11.500" font-weight="700" fill="#4a6a3a">I</text><g transform="translate(12.300,9.800)"><path d="M1.700 4.200V2.500a1.400 1.400 0 0 1 2.800 0V4.200" fill="none" stroke="#9aa7b0" stroke-width="1.200"/><rect x="0" y="3.900" width="6.200" height="4.700" fill="#9aa7b0"/></g></svg>
<span class="t" style="left:201px;top:824px;line-height:18px;font-size:16.2px;letter-spacing:0.390px;">ApplicationContext</span>
<svg style="left:179px;top:851.50px" width="20" height="20"><circle cx="8.500" cy="8.500" r="8.900" fill="#9bd17c"/><text x="8.300" y="12.300" text-anchor="middle" font-family="Liberation Mono,monospace" font-size="11.500" font-weight="700" fill="#4a6a3a">I</text><g transform="translate(12.300,9.800)"><path d="M1.700 4.200V2.500a1.400 1.400 0 0 1 2.800 0V4.200" fill="none" stroke="#9aa7b0" stroke-width="1.200"/><rect x="0" y="3.900" width="6.200" height="4.700" fill="#9aa7b0"/></g></svg>
<span class="t" style="left:201px;top:850px;line-height:18px;font-size:16.2px;letter-spacing:0.301px;">ApplicationContextAware</span>
<div style="left:0px;top:851px;width:361px;height:11px;background:rgba(160,160,140,0.30);"></div>
<div style="left:490px;top:610px;width:11px;height:37px;background:rgba(160,160,140,0.30);"></div>
</div>
<div style="left:531px;top:93px;width:219px;height:29px;background:#d4d4d4;"></div>
<div style="left:750px;top:93px;width:1px;height:29px;background:#a0a0a0;"></div>
<div style="left:751px;top:93px;width:170px;height:29px;background:#d6d4be;"></div>
<div style="left:921px;top:93px;width:1px;height:29px;background:#a0a0a0;"></div>
<div style="left:922px;top:93px;width:293px;height:30px;background:#ffffe4;"></div>
<div style="left:1215px;top:93px;width:1px;height:29px;background:#a0a0a0;"></div>
<span class="t" style="left:564px;top:99px;line-height:18px;font-size:16.2px;letter-spacing:0.171px;color:#1a1a1a;">DemoApplication.java</span>
<span class="t" style="left:784px;top:99px;line-height:18px;font-size:16.2px;letter-spacing:0.087px;color:#1a1a1a;">spring.handlers</span>
<span class="t" style="left:955px;top:99px;line-height:18px;font-size:16.2px;letter-spacing:0.041px;">ContextNamespaceHandler.java</span>
<svg style="left:731px;top:103px;" width="10" height="10" viewBox="0 0 10 10"><path d="M1 1L9 9M9 1L1 9" stroke="#a3a3a3" stroke-width="1.2"/></svg>
<svg style="left:903px;top:103px;" width="10" height="10" viewBox="0 0 10 10"><path d="M1 1L9 9M9 1L1 9" stroke="#a3a3a3" stroke-width="1.2"/></svg>
<svg style="left:1195px;top:103px;" width="10" height="10" viewBox="0 0 10 10"><path d="M1 1L9 9M9 1L1 9" stroke="#a3a3a3" stroke-width="1.2"/></svg>
<svg style="left:541px;top:98px;" width="22" height="22" viewBox="0 0 22 22"><circle cx="9.800" cy="10.800" r="8.700" fill="#86cee5"/><text x="8.800" y="14.800" text-anchor="middle" font-family="Liberation Sans,sans-serif" font-size="11.500" font-weight="400" stroke="#44606c" stroke-width="0.350" fill="#44606c">C</text><path d="M12.900 1L20 5L12.900 9z" fill="#45b035"/><path d="M9.300 12.900l4.800-2.700 4.800 2.700v5.400l-4.800 2.700-4.800-2.700z" fill="#9aa7b0" stroke="#d4d4d4" stroke-width="0.800"/><circle cx="14.100" cy="15.900" r="2.300" fill="none" stroke="#e8ecee" stroke-width="0.900"/><path d="M14.100 13.200V15.600" stroke="#e8ecee" stroke-width="1"/></svg>
<svg style="left:763px;top:98px;" width="20" height="22" viewBox="0 0 20 22"><path d="M7 2.200V6.800H2.200z" fill="#aab4ba"/><path d="M8 2.200H14V11H8z" fill="#aab4ba"/><path d="M2.200 9H9V19.800H2.200z" fill="#aab4ba"/><rect x="7.400" y="14" width="4" height="7.600" fill="#d6d4be"/><rect x="8" y="14.700" width="2.700" height="6.100" fill="#f26522"/><rect x="12" y="12.100" width="2.100" height="4.500" fill="#f4af3d"/><rect x="15.300" y="10" width="2.700" height="6.500" fill="#62b543"/><path d="M13.900 16.400V14.500a1.400 1.400 0 0 1 2.800 0V16.400" fill="none" stroke="#9aa7b0" stroke-width="1.200"/><rect x="12.200" y="16.200" width="5.900" height="4.600" fill="#9aa7b0"/></svg>
<svg style="left:934.500px;top:99.500px" width="20" height="20"><circle cx="8.500" cy="8.500" r="8.900" fill="#86cee5"/><text x="8.300" y="12.200" text-anchor="middle" font-family="Liberation Sans,sans-serif" font-size="10.600" font-weight="400" stroke="#46606b" stroke-width="0.450" fill="#46606b">C</text><g transform="translate(12.300,9.800)"><path d="M1.700 4.200V2.500a1.400 1.400 0 0 1 2.800 0V4.200" fill="none" stroke="#9aa7b0" stroke-width="1.200"/><rect x="0" y="3.900" width="6.200" height="4.700" fill="#9aa7b0"/></g></svg>
<div style="left:531px;top:600px;width:1361px;height:22.5px;background:#fffae3;"></div>
<div style="left:603px;top:128px;width:1px;height:830px;background:#d4d4d4;"></div>
<div style="left:1812px;top:128px;width:1px;height:830px;background:#dcdcdc;"></div>
<div style="left:655px;top:533px;width:1px;height:180.0px;background:#e4e4e4;"></div>
<span class="t" style="left:546.5500000000001px;top:132px;line-height:16px;font-size:13.7px;color:#a0a0a0;font-family:'DejaVu Sans','Liberation Sans',sans-serif;">1</span>
<span class="t" style="left:538.0px;top:155px;line-height:16px;font-size:13.7px;letter-spacing:0.550px;color:#a0a0a0;font-family:'DejaVu Sans','Liberation Sans',sans-serif;">16</span>
<span class="t" style="left:538.0px;top:177px;line-height:16px;font-size:13.7px;letter-spacing:0.550px;color:#a0a0a0;font-family:'DejaVu Sans','Liberation Sans',sans-serif;">17</span>
<span class="t" style="left:538.0px;top:200px;line-height:16px;font-size:13.7px;letter-spacing:0.550px;color:#a0a0a0;font-family:'DejaVu Sans','Liberation Sans',sans-serif;">18</span>
<span class="t" style="left:538.0px;top:222px;line-height:16px;font-size:13.7px;letter-spacing:0.550px;color:#a0a0a0;font-family:'DejaVu Sans','Liberation Sans',sans-serif;">19</span>
<span class="t" style="left:538.0px;top:245px;line-height:16px;font-size:13.7px;letter-spacing:0.550px;color:#a0a0a0;font-family:'DejaVu Sans','Liberation Sans',sans-serif;">22</span>
<span class="t" style="left:538.0px;top:267px;line-height:16px;font-size:13.7px;letter-spacing:0.550px;color:#a0a0a0;font-family:'DejaVu Sans','Liberation Sans',sans-serif;">23</span>
<span class="t" style="left:538.0px;top:290px;line-height:16px;font-size:13.7px;letter-spacing:0.550px;color:#a0a0a0;font-family:'DejaVu Sans','Liberation Sans',sans-serif;">24</span>
<span class="t" style="left:538.0px;top:312px;line-height:16px;font-size:13.7px;letter-spacing:0.550px;color:#a0a0a0;font-family:'DejaVu Sans','Liberation Sans',sans-serif;">25</span>
<span class="t" style="left:538.0px;top:335px;line-height:16px;font-size:13.7px;letter-spacing:0.550px;color:#a0a0a0;font-family:'DejaVu Sans','Liberation Sans',sans-serif;">26</span>
<span class="t" style="left:538.0px;top:357px;line-height:16px;font-size:13.7px;letter-spacing:0.550px;color:#a0a0a0;font-family:'DejaVu Sans','Liberation Sans',sans-serif;">27</span>
<span class="t" style="left:538.0px;top:380px;line-height:16px;font-size:13.7px;letter-spacing:0.550px;color:#a0a0a0;font-family:'DejaVu Sans','Liberation Sans',sans-serif;">28</span>
<span class="t" style="left:538.0px;top:402px;line-height:16px;font-size:13.7px;letter-spacing:0.550px;color:#a0a0a0;font-family:'DejaVu Sans','Liberation Sans',sans-serif;">29</span>
<span class="t" style="left:538.0px;top:425px;line-height:16px;font-size:13.7px;letter-spacing:0.550px;color:#a0a0a0;font-family:'DejaVu Sans','Liberation Sans',sans-serif;">30</span>
<span class="t" style="left:538.0px;top:447px;line-height:16px;font-size:13.7px;letter-spacing:0.550px;color:#a0a0a0;font-family:'DejaVu Sans','Liberation Sans',sans-serif;">31</span>
<span class="t" style="left:538.0px;top:470px;line-height:16px;font-size:13.7px;letter-spacing:0.550px;color:#a0a0a0;font-family:'DejaVu Sans','Liberation Sans',sans-serif;">32</span>
<span class="t" style="left:538.0px;top:492px;line-height:16px;font-size:13.7px;letter-spacing:0.550px;color:#a0a0a0;font-family:'DejaVu Sans','Liberation Sans',sans-serif;">33</span>
<span class="t" style="left:538.0px;top:515px;line-height:16px;font-size:13.7px;letter-spacing:0.550px;color:#a0a0a0;font-family:'DejaVu Sans','Liberation Sans',sans-serif;">34</span>
<span class="t" style="left:538.0px;top:537px;line-height:16px;font-size:13.7px;letter-spacing:0.550px;color:#a0a0a0;font-family:'DejaVu Sans','Liberation Sans',sans-serif;">35</span>
<span class="t" style="left:538.0px;top:560px;line-height:16px;font-size:13.7px;letter-spacing:0.550px;color:#a0a0a0;font-family:'DejaVu Sans','Liberation Sans',sans-serif;">36</span>
<span class="t" style="left:538.0px;top:582px;line-height:16px;font-size:13.7px;letter-spacing:0.550px;color:#a0a0a0;font-family:'DejaVu Sans','Liberation Sans',sans-serif;">37</span>
<span class="t" style="left:538.0px;top:605px;line-height:16px;font-size:13.7px;letter-spacing:0.550px;color:#a0a0a0;font-family:'DejaVu Sans','Liberation Sans',sans-serif;">38</span>
<span class="t" style="left:538.0px;top:627px;line-height:16px;font-size:13.7px;letter-spacing:0.550px;color:#a0a0a0;font-family:'DejaVu Sans','Liberation Sans',sans-serif;">39</span>
<span class="t" style="left:538.0px;top:650px;line-height:16px;font-size:13.7px;letter-spacing:0.550px;color:#a0a0a0;font-family:'DejaVu Sans','Liberation Sans',sans-serif;">40</span>
<span class="t" style="left:538.0px;top:672px;line-height:16px;font-size:13.7px;letter-spacing:0.550px;color:#a0a0a0;font-family:'DejaVu Sans','Liberation Sans',sans-serif;">41</span>
<span class="t" style="left:538.0px;top:695px;line-height:16px;font-size:13.7px;letter-spacing:0.550px;color:#a0a0a0;font-family:'DejaVu Sans','Liberation Sans',sans-serif;">42</span>
<span class="t" style="left:538.0px;top:717px;line-height:16px;font-size:13.7px;letter-spacing:0.550px;color:#a0a0a0;font-family:'DejaVu Sans','Liberation Sans',sans-serif;">43</span>
<span class="t" style="left:538.0px;top:740px;line-height:16px;font-size:13.7px;letter-spacing:0.550px;color:#a0a0a0;font-family:'DejaVu Sans','Liberation Sans',sans-serif;">44</span>
<span class="t" style="left:538.0px;top:762px;line-height:16px;font-size:13.7px;letter-spacing:0.550px;color:#a0a0a0;font-family:'DejaVu Sans','Liberation Sans',sans-serif;">45</span>
<span class="t" style="left:538.0px;top:785px;line-height:16px;font-size:13.7px;letter-spacing:0.550px;color:#a0a0a0;font-family:'DejaVu Sans','Liberation Sans',sans-serif;">46</span>
<span class="t c" style="left:612px;top:128px"><span class="f">/.../</span></span>
<span class="t c" style="left:612px;top:173px"><b class="k">package</b> org.springframework.context.config;</span>
<span class="t c" style="left:612px;top:218px"><b class="k">import</b> <span class="f">...</span></span>
<span class="t c" style="left:612px;top:263px"><span class="d">/**</span></span>
<span class="t c" style="left:612px;top:286px"><span class="d"> * {<b class="dt">@link</b> <span class="dl">org.springframework.beans.factory.xml.NamespaceHandler</span>}</span></span>
<span class="t c" style="left:612px;top:308px"><span class="d"> * for the '{<b class="dt">@code</b> context}' namespace.</span></span>
<span class="t c" style="left:612px;top:331px"><span class="d"> *</span></span>
<span class="t c" style="left:612px;top:353px"><span class="d"> * <b class="dt">@author</b> Mark Fisher</span></span>
<span class="t c" style="left:612px;top:376px"><span class="d"> * <b class="dt">@author</b> Juergen Hoeller</span></span>
<span class="t c" style="left:612px;top:398px"><span class="d"> * <b class="dt">@since</b> 2.5</span></span>
<span class="t c" style="left:612px;top:421px"><span class="d"> */</span></span>
<span class="t c" style="left:612px;top:443px"><b class="k">public</b> <b class="k">class</b> ContextNamespaceHandler <b class="k">extends</b> NamespaceHandlerSupport {</span>
<span class="t c" style="left:612px;top:488px">    <span class="a">@Override</span></span>
<span class="t c" style="left:612px;top:511px">    <b class="k">public</b> <b class="k">void</b> init() {</span>
<span class="t c" style="left:612px;top:533px">        registerBeanDefinitionParser(<i class="h">elementName:</i><b class="s">&quot;property-placeholder&quot;</b>, <b class="k">new</b> PropertyPlaceholderBeanDefinitionParser());</span>
<span class="t c" style="left:612px;top:556px">        registerBeanDefinitionParser(<i class="h">elementName:</i><b class="s">&quot;property-override&quot;</b>, <b class="k">new</b> PropertyOverrideBeanDefinitionParser());</span>
<span class="t c" style="left:612px;top:578px">        registerBeanDefinitionParser(<i class="h">elementName:</i><b class="s">&quot;annotation-config&quot;</b>, <b class="k">new</b> AnnotationConfigBeanDefinitionParser());</span>
<span class="t c" style="left:612px;top:601px">        registerBeanDefinitionParser(<i class="h">elementName:</i><b class="s">&quot;component-scan&quot;</b>, <b class="k">new</b> ComponentScanBeanDefinitionParser());</span>
<span class="t c" style="left:612px;top:623px">        registerBeanDefinitionParser(<i class="h">elementName:</i><b class="s">&quot;load-time-weaver&quot;</b>, <b class="k">new</b> LoadTimeWeaverBeanDefinitionParser());</span>
<span class="t c" style="left:612px;top:646px">        registerBeanDefinitionParser(<i class="h">elementName:</i><b class="s">&quot;spring-configured&quot;</b>, <b class="k">new</b> SpringConfiguredBeanDefinitionParser());</span>
<span class="t c" style="left:612px;top:668px">        registerBeanDefinitionParser(<i class="h">elementName:</i><b class="s">&quot;mbean-export&quot;</b>, <b class="k">new</b> MBeanExportBeanDefinitionParser());</span>
<span class="t c" style="left:612px;top:691px">        registerBeanDefinitionParser(<i class="h">elementName:</i><b class="s">&quot;mbean-server&quot;</b>, <b class="k">new</b> MBeanServerBeanDefinitionParser());</span>
<span class="t c" style="left:612px;top:713px">    }</span>
<span class="t c" style="left:612px;top:758px">}</span>
<div style="left:1172px;top:601px;width:2px;height:21.5px;background:#000;"></div>
<div style="left:1095px;top:575px;width:227px;height:66.5px;border:7px solid #f63838;box-sizing:border-box;"></div>
<svg style="left:597.2px;top:134.3px;" width="12" height="12" viewBox="0 0 12 12"><rect x="0.9" y="0.5" width="10.2" height="10.2" fill="#fff" stroke="#cbcbcb" stroke-width="1"/><path d="M3 5.6H9M6 2.600V8.600" stroke="#cbcbcb" stroke-width="1.1"/></svg>
<svg style="left:597.2px;top:224.3px;" width="12" height="12" viewBox="0 0 12 12"><rect x="0.9" y="0.5" width="10.2" height="10.2" fill="#fff" stroke="#cbcbcb" stroke-width="1"/><path d="M3 5.6H9M6 2.600V8.600" stroke="#cbcbcb" stroke-width="1.1"/></svg>
<svg style="left:597.2px;top:268.8px;" width="12" height="15" viewBox="0 0 12 15"><path d="M0.9 0.5H11.1V8.600L6 13.400L0.9 8.600z" fill="#fff" stroke="#cbcbcb" stroke-width="1"/><path d="M3 5.600H9" stroke="#bdbdbd" stroke-width="1.1"/></svg>
<svg style="left:597.2px;top:422.8px;" width="12" height="16" viewBox="0 0 12 16"><path d="M0.9 14.500H11.1V5.700L6 0.9L0.9 5.700z" fill="#fff" stroke="#cbcbcb" stroke-width="1"/><path d="M3 9.800H9" stroke="#bdbdbd" stroke-width="1.1"/></svg>
<svg style="left:597.2px;top:516.8px;" width="12" height="15" viewBox="0 0 12 15"><path d="M0.9 0.5H11.1V8.600L6 13.400L0.9 8.600z" fill="#fff" stroke="#cbcbcb" stroke-width="1"/><path d="M3 5.600H9" stroke="#bdbdbd" stroke-width="1.1"/></svg>
<svg style="left:597.2px;top:714.8px;" width="12" height="16" viewBox="0 0 12 16"><path d="M0.9 14.500H11.1V5.700L6 0.9L0.9 5.700z" fill="#fff" stroke="#cbcbcb" stroke-width="1"/><path d="M3 9.800H9" stroke="#bdbdbd" stroke-width="1.1"/></svg>
<svg style="left:563px;top:511px;" width="18" height="20" viewBox="0 0 18 20"><circle cx="6.600" cy="10.400" r="5.600" fill="#8ccf79"/><text x="6.600" y="14.200" text-anchor="middle" font-family="Liberation Mono,monospace" font-size="9.500" font-weight="700" fill="#36502c">I</text><path d="M14.400 19V5" stroke="#db5860" stroke-width="1.400"/><path d="M14.400 1.600L17.700 6.200H11.100z" fill="#db5860"/></svg>
<svg style="left:1875px;top:129px;" width="17" height="14" viewBox="0 0 17 14"><path d="M2 7.200L6.200 11.200L14.500 2.800" fill="none" stroke="#4fa65c" stroke-width="2.600"/></svg>
<svg style="left:15px;top:64px;" width="13" height="18" viewBox="0 0 13 18"><rect x="0" y="0.400" width="3.200" height="17.200" fill="#aab4ba"/><rect x="9" y="0.400" width="3.200" height="17.200" fill="#aab4ba"/><rect x="3.200" y="0.400" width="5.800" height="17.200" fill="#bfe6f5"/><path d="M4 1l4 1.500-4 1.500 4 1.500-4 1.500 4 1.500-4 1.500 4 1.500-4 1.500 4 1.500-4 1.500 4 1.500" fill="none" stroke="#40b6e0" stroke-width="1.100"/></svg>
<svg style="left:281px;top:63px;" width="8" height="21" viewBox="0 0 8 21"><path d="M0.800 0.800L6 10.300L0.800 19.800" fill="none" stroke="#c8c8c8" stroke-width="1.100"/></svg>
<svg style="left:346px;top:63px;" width="8" height="21" viewBox="0 0 8 21"><path d="M0.800 0.800L6 10.300L0.800 19.800" fill="none" stroke="#c8c8c8" stroke-width="1.100"/></svg>
<svg style="left:509px;top:63px;" width="8" height="21" viewBox="0 0 8 21"><path d="M0.800 0.800L6 10.300L0.800 19.800" fill="none" stroke="#c8c8c8" stroke-width="1.100"/></svg>
<svg style="left:605px;top:63px;" width="8" height="21" viewBox="0 0 8 21"><path d="M0.800 0.800L6 10.300L0.800 19.800" fill="none" stroke="#c8c8c8" stroke-width="1.100"/></svg>
<svg style="left:690px;top:63px;" width="8" height="21" viewBox="0 0 8 21"><path d="M0.800 0.800L6 10.300L0.800 19.800" fill="none" stroke="#c8c8c8" stroke-width="1.100"/></svg>
<svg style="left:294px;top:65px" width="18" height="16"><path d="M0 1h6.4l1.6 2.4H17V14.8H0z" fill="#aab4ba"/><circle cx="7.2" cy="9" r="2.7" fill="#f2f2f2"/></svg>
<svg style="left:359px;top:65px" width="18" height="16"><path d="M0 1h6.4l1.6 2.4H17V14.8H0z" fill="#aab4ba"/><circle cx="7.2" cy="9" r="2.7" fill="#f2f2f2"/></svg>
<svg style="left:522px;top:65px" width="18" height="16"><path d="M0 1h6.4l1.6 2.4H17V14.8H0z" fill="#aab4ba"/><circle cx="7.2" cy="9" r="2.7" fill="#f2f2f2"/></svg>
<svg style="left:617.5px;top:65px" width="18" height="16"><path d="M0 1h6.4l1.6 2.4H17V14.8H0z" fill="#aab4ba"/><circle cx="7.2" cy="9" r="2.7" fill="#f2f2f2"/></svg>
<svg style="left:702.500px;top:65.500px" width="18" height="18"><circle cx="8.500" cy="8.500" r="8.900" fill="#86cee5"/><text x="8.300" y="12.200" text-anchor="middle" font-family="Liberation Sans,sans-serif" font-size="10.600" font-weight="400" stroke="#46606b" stroke-width="0.450" fill="#46606b">C</text></svg>
<svg style="left:1422px;top:64px;" width="22" height="20" viewBox="0 0 22 20"><path d="M0.850 8.500L7.600 1.500L12 1.100L11.600 2.450L8.650 5.100L12.800 9L20.200 15.600L16.700 18.700L10.400 12.100L9.900 10.650L6.600 7.600L3.400 10.900z" fill="#59a869"/></svg>
<div style="left:1456px;top:60px;width:186.5px;height:27.5px;background:#e3e3e3;border:1px solid #bdbdbd;box-sizing:border-box;"></div>
<svg style="left:1463px;top:65px;" width="22" height="21" viewBox="0 0 22 21"><path d="M17.600 0.400C16 3 13 4.200 10 4.600C6 5 2.500 6.500 1.200 10C0.400 12.500 1.500 14.300 3.200 14.900L5 15.500L8.600 15.200L10 10L13 7.500L18.800 6.800z" fill="#8cc774"/><path d="M8.400 13L11.400 7.600H17.600L20.600 13L17.600 18.400H11.400z" fill="#9aa7b0" stroke="#e3e3e3" stroke-width="0.900"/><circle cx="14.500" cy="13.300" r="2.500" fill="none" stroke="#e8ecee" stroke-width="1.100"/><path d="M14.500 9.700V13" stroke="#9aa7b0" stroke-width="2.200"/><path d="M14.500 9.900V13" stroke="#e8ecee" stroke-width="1"/></svg>
<span class="t" style="left:1488px;top:66px;line-height:17px;font-size:16px;letter-spacing:0.503px;">DemoApplication</span>
<svg style="left:1624px;top:70px;" width="14" height="9" viewBox="0 0 14 9"><path d="M1.300 1.600L6.700 6.800L12.100 1.600" fill="none" stroke="#4d4d4d" stroke-width="1.200"/></svg>
<svg style="left:1658px;top:65px;" width="16" height="18" viewBox="0 0 16 18"><path d="M1.800 1.500L14.200 8.900L1.800 16.300z" fill="#59a869"/></svg>
<svg style="left:1688px;top:64px;" width="20" height="19" viewBox="0 0 20 19"><path d="M6 3.200L4.800 1.600M14 3.200L15.200 1.600" stroke="#59a869" stroke-width="1.500"/><path d="M5.800 5.500a4.200 3.600 0 0 1 8.400 0z" fill="#59a869"/><path d="M4.600 6.600h10.800v5.400a5.400 5.400 0 0 1-10.800 0z" fill="#59a869"/><path d="M1.800 6.800h3M1.800 10.500h3M2.300 14.500h3M15.200 6.800h3M15.200 10.500h3M14.700 14.500h3" stroke="#59a869" stroke-width="1.600"/><path d="M7.500 9.200h5M7.500 12.300h5" stroke="#f2f2f2" stroke-width="1.400"/></svg>
<svg style="left:1720px;top:65px;" width="22" height="20" viewBox="0 0 22 20"><path d="M1 2.200L7.600 0.600L14.200 2.200V8.500C14.200 12.500 11 15 7.600 16.200C4.200 15 1 12.500 1 8.500z" fill="#6e6e6e"/><path d="M7.600 2.600L12 3.700V8.500C12 10.500 10.500 12.400 7.600 13.800z" fill="#f2f2f2"/><path d="M9.800 7.500L20 13.500L9.800 19.500z" fill="#59a869" stroke="#f2f2f2" stroke-width="1"/></svg>
<svg style="left:1753px;top:64px;" width="23" height="22" viewBox="0 0 23 22"><circle cx="8.800" cy="9" r="6.600" fill="none" stroke="#c6c6c6" stroke-width="1.500"/><path d="M8.800 5V9.500L6.500 11.300" fill="none" stroke="#c6c6c6" stroke-width="1.300"/><path d="M10.500 9.500L20.500 14.200L16.500 15.600L19 19.300L17 20.500L14.700 16.800L11.800 19.600z" fill="#c6c6c6" stroke="#f2f2f2" stroke-width="0.800"/></svg>
<div style="left:1789px;top:68px;width:12.5px;height:12px;background:#c4c4c4;"></div>
<div style="left:1815px;top:62px;width:1px;height:24px;background:#cfcfcf;"></div>
<svg style="left:1826px;top:66px;" width="21" height="18" viewBox="0 0 21 18"><path d="M0.800 1.500H7.200L9.200 3.800H18.500V14.200H0.800z" fill="#6e6e6e"/><rect x="8.800" y="7" width="10.500" height="10.500" fill="#f2f2f2"/><rect x="9.800" y="8" width="3.900" height="3.900" fill="#389fd6"/><rect x="14.700" y="8" width="3.900" height="3.900" fill="#389fd6"/><rect x="9.800" y="12.900" width="3.900" height="3.900" fill="#389fd6"/><rect x="14.700" y="12.900" width="3.900" height="3.900" fill="#389fd6"/></svg>
<svg style="left:1859px;top:65px;" width="20" height="18" viewBox="0 0 20 18"><rect x="1.800" y="2" width="16.400" height="13.800" fill="none" stroke="#6e6e6e" stroke-width="1.400"/><rect x="1.100" y="1.300" width="17.800" height="3.600" fill="#6e6e6e"/><path d="M5.500 6.800L11.800 10.300L5.500 13.800z" fill="#59a869"/></svg>
<svg style="left:1890px;top:64px;" width="22" height="20" viewBox="0 0 22 20"><circle cx="8.600" cy="8.200" r="5.700" fill="none" stroke="#6e6e6e" stroke-width="2.100"/><path d="M12.800 12.400L19.200 18.600" stroke="#6e6e6e" stroke-width="2.400"/></svg>
<span class="t" style="left:5.675750000000001px;top:167.5px;transform-origin:0 0;transform:rotate(-90deg);font-size:14.5px;letter-spacing:-0.125px;line-height:20px;color:#000"><u>1</u>: Project</span>
<svg style="left:7px;top:173px;" width="15" height="13" viewBox="0 0 15 13"><path d="M0.300 0.800H5.800L7.300 2.800H14.300V12.300H0.300z" fill="#6e6e6e"/></svg>
<span class="t" style="left:5.675750000000001px;top:754.5px;transform-origin:0 0;transform:rotate(-90deg);font-size:14.5px;letter-spacing:-0.163px;line-height:20px;color:#000"><u>7</u>: Structure</span>
<svg style="left:8px;top:760px;" width="14" height="13" viewBox="0 0 14 13"><rect x="0.500" y="6.600" width="5.600" height="5.600" fill="#6e6e6e"/><rect x="7.300" y="6.600" width="5.600" height="5.600" fill="#9a9a9a"/><rect x="4" y="0.400" width="5.600" height="5.600" fill="#6e6e6e"/></svg>
<span class="t" style="left:5.675750000000001px;top:877.5px;transform-origin:0 0;transform:rotate(-90deg);font-size:14.5px;letter-spacing:-0.438px;line-height:20px;color:#000"><u>2</u>: Favorites</span>
<svg style="left:6px;top:881px;" width="17" height="17" viewBox="0 0 17 17"><path d="M8.500 0.600L10.900 5.900L16.600 6.500L12.300 10.400L13.500 16.100L8.500 13.200L3.500 16.100L4.700 10.400L0.400 6.500L6.100 5.900z" fill="#6e6e6e"/></svg>
<span class="t" style="left:5.675750000000001px;top:954.3px;transform-origin:0 0;transform:rotate(-90deg);font-size:14.5px;letter-spacing:-0.354px;line-height:20px;color:#000">Web</span>
<svg style="left:6.5px;top:960px;" width="16" height="16" viewBox="0 0 16 16"><circle cx="7.700" cy="7.700" r="7.200" fill="#6e6e6e"/><path d="M2.500 5.500C4 3 6.500 2.600 8 3.200L7.500 5.500L5.500 7L6.500 9.500L4.500 12C3 10.500 2 8 2.500 5.500z M9.500 6.500L12.500 5.500C13.500 7.500 13.200 10 11.500 12L9.800 10.500L10.500 8.500z" fill="#f2f2f2"/></svg>
<svg style="left:1899px;top:106px;" width="16" height="15" viewBox="0 0 16 15"><path d="M7.700 3.200a1.700 1.700 0 1 1 0.010 0z M7.700 3.400c1.400 0 2 1.200 2 2.400s-0.700 2-2 2-2-0.800-2-2 0.600-2.400 2-2.400z M7.700 8c1.900 0 2.900 1.600 2.900 3.400s-1.200 3-2.900 3-2.900-1.200-2.900-3 1-3.400 2.900-3.400z" fill="#6e6e6e"/><path d="M5.800 5L3 3.500L1 0.800M9.600 5L12.400 3.500L14.400 0.800M5.700 6.500L2.500 6.500L0.600 8.500M9.700 6.500L12.900 6.500L14.800 8.500M5.900 7.500L3.200 9.500L2.200 13.500M9.500 7.500L12.200 9.500L13.200 13.500" fill="none" stroke="#6e6e6e" stroke-width="1.100"/></svg>
<span class="t" style="left:1914.52425px;top:126.5px;transform-origin:0 0;transform:rotate(90deg);font-size:14.5px;letter-spacing:-0.116px;line-height:20px;color:#000">Ant Build</span>
<span class="t" style="left:1898.500px;top:209.500px;font-size:20px;font-weight:700;font-style:italic;line-height:22px;color:#6e6e6e;letter-spacing:0">m</span>
<span class="t" style="left:1914.52425px;top:235px;transform-origin:0 0;transform:rotate(90deg);font-size:14.5px;letter-spacing:-0.306px;line-height:20px;color:#000">Maven</span>
<svg style="left:1899px;top:308px;" width="16" height="17" viewBox="0 0 16 17"><ellipse cx="7.800" cy="3.600" rx="7" ry="2.900" fill="#6e6e6e"/><path d="M0.800 5.600c1.500 2.300 12.500 2.300 14 0v2.600c-1.500 2.300-12.500 2.300-14 0z M0.800 9.400c1.500 2.300 12.500 2.300 14 0v2.600c-1.500 2.300-12.500 2.300-14 0z M0.800 13.200c1.500 2.300 12.500 2.300 14 0v0.800c-1.500 3-12.500 3-14 0z" fill="#6e6e6e"/></svg>
<span class="t" style="left:1914.52425px;top:329px;transform-origin:0 0;transform:rotate(90deg);font-size:14.5px;letter-spacing:-0.572px;line-height:20px;color:#000">Database</span>
<svg style="left:42px;top:997px;" width="14" height="12" viewBox="0 0 14 12"><path d="M0.300 1.400h2.400M0.300 5.600h2.400M0.300 9.800h2.400" stroke="#6e6e6e" stroke-width="2"/><path d="M4.400 1.400h9M4.400 5.600h9M4.400 9.800h9" stroke="#6e6e6e" stroke-width="2"/></svg>
<span class="t" style="left:61px;top:996px;line-height:16px;font-size:13.9px;letter-spacing:0.203px;"><u>6</u>: TODO</span>
<svg style="left:142px;top:996px;" width="17" height="13" viewBox="0 0 17 13"><path d="M0.800 8.200C1.200 3.500 6 2.600 10.500 2.400C12.500 2.200 14 1.400 15.400 0.300C16.400 4.500 15.800 8.500 12.800 10.800C9.800 13 5 12.600 2.600 11.200L1.400 12.600L0.600 12C1.400 11 1 10 0.800 8.200z" fill="#6e6e6e"/></svg>
<span class="t" style="left:164px;top:996px;line-height:16px;font-size:13.9px;letter-spacing:0.557px;">Spring</span>
<svg style="left:234.5px;top:996px;" width="15" height="14" viewBox="0 0 15 14"><rect x="0.300" y="0.500" width="14" height="12.500" fill="#6e6e6e"/><path d="M2.800 3.300L6.200 6.300L2.800 9.300" fill="none" stroke="#f2f2f2" stroke-width="1.300"/><path d="M6.800 10.100H11.800" stroke="#f2f2f2" stroke-width="1.300"/></svg>
<span class="t" style="left:254.5px;top:996px;line-height:16px;font-size:13.9px;letter-spacing:0.875px;">Terminal</span>
<svg style="left:340px;top:996px;" width="16" height="14" viewBox="0 0 16 14"><path d="M7.700 0.600L15 13H0.400z" fill="#6e6e6e"/><path d="M7.700 4.600V9" stroke="#f2f2f2" stroke-width="1.600"/><circle cx="7.700" cy="11" r="0.900" fill="#f2f2f2"/></svg>
<span class="t" style="left:361px;top:996px;line-height:16px;font-size:13.9px;letter-spacing:0.604px;">Problems</span>
<svg style="left:453px;top:996px;" width="16" height="15" viewBox="0 0 16 15"><rect x="0.500" y="0.500" width="11.500" height="11" fill="#6e6e6e"/><rect x="1.800" y="3.200" width="8.900" height="7" fill="#8a8a8a"/><rect x="5" y="6.500" width="10.500" height="8" fill="#f2f2f2"/><rect x="5.800" y="7.300" width="9" height="6.600" fill="#6e6e6e"/><path d="M7 9.200h2.400M10.600 9.200h3M7 11.800h2.400M10.600 11.800h3" stroke="#f2f2f2" stroke-width="1.500"/></svg>
<span class="t" style="left:474px;top:996px;line-height:16px;font-size:13.9px;letter-spacing:0.232px;">Java Enterprise</span>
<svg style="left:606px;top:995px;" width="16" height="16" viewBox="0 0 16 16"><ellipse cx="7.300" cy="3" rx="6.800" ry="2.600" fill="#6e6e6e"/><path d="M0.500 5c1.500 2.100 12.100 2.100 13.600 0v2.300c-1.500 2.100-12.100 2.100-13.600 0z" fill="#6e6e6e"/><path d="M0.500 8.600c1 1.500 6 2 9 1.300l-2 2.200c-3 0.200-6-0.400-7-1.400z M0.500 12.200c1 1.300 4 1.800 6.500 1.700l0.800 1.300c-3 0.300-6.300-0.300-7.300-1.500z" fill="#6e6e6e"/><path d="M8.200 11.600L10.700 14L15 9.600" fill="none" stroke="#6e6e6e" stroke-width="1.700"/></svg>
<span class="t" style="left:626px;top:996px;line-height:16px;font-size:13.9px;letter-spacing:0.410px;">Database Changes</span>
<svg style="left:1790px;top:994px;" width="19" height="18" viewBox="0 0 19 18"><path d="M9 1.800a7.200 7.200 0 1 0 0 14.400H16.200V9A7.200 7.200 0 0 0 9 1.800z" fill="none" stroke="#6e6e6e" stroke-width="1.800"/></svg>
<span class="t" style="left:1813px;top:996px;line-height:16px;font-size:13.9px;letter-spacing:0.271px;">Event Log</span>
<svg style="left:12px;top:1021px;" width="17" height="17" viewBox="0 0 17 17"><path d="M1.200 4.200V15.300H12.300" fill="none" stroke="#8a8a8a" stroke-width="1.300"/><rect x="3.800" y="1.200" width="11.500" height="11.500" fill="none" stroke="#8a8a8a" stroke-width="1.300"/></svg>
<span class="t" style="left:1686.5px;top:1021px;line-height:16px;font-size:14.6px;letter-spacing:0.794px;">38:44</span>
<span class="t" style="left:1743.5px;top:1021px;line-height:16px;font-size:14.6px;letter-spacing:-0.516px;color:#9a9a9a;">LF</span>
<span class="t" style="left:1776.5px;top:1021px;line-height:16px;font-size:14.6px;letter-spacing:0.328px;color:#9a9a9a;">UTF-8</span>
<svg style="left:1837px;top:1022px;" width="12" height="15" viewBox="0 0 12 15"><path d="M2.900 6.500V4a3 3 0 0 1 6 0V6.500" fill="none" stroke="#6e6e6e" stroke-width="1.700"/><rect x="0.800" y="6.300" width="10.200" height="7.600" fill="#6e6e6e"/></svg>
<svg style="left:1864px;top:1021px;" width="19" height="20" viewBox="0 0 19 20"><path d="M7.200 0.800l1.500.2.400 1.700 1.200.6 1.600-.7 1 1.300-.9 1.500.3 1.200 1.600.7-.2 1.600-1.700.4-.6 1.200.7 1.500-1.300 1-1.500-.9-1.200.3-.7 1.600-1.600-.2-.4-1.700-1.200-.6-1.500.7-1-1.300.9-1.500-.3-1.200-1.600-.7.200-1.600 1.700-.4.600-1.200-.700-1.500 1.300-1 1.500.900 1.200-.300z" fill="#6e6e6e"/><circle cx="7.200" cy="7.200" r="2.300" fill="#f2f2f2"/><rect x="8.500" y="8" width="10" height="12" fill="#f2f2f2"/><path d="M10.800 11.200C10.800 8.500 15.800 8.500 15.800 11.300C15.800 13.200 13.400 13.200 13.400 15.500" fill="none" stroke="#6e6e6e" stroke-width="1.600"/><circle cx="13.400" cy="18" r="1" fill="#6e6e6e"/></svg>
<svg style="left:1894px;top:1020px;" width="18" height="18" viewBox="0 0 18 18"><path d="M4.800 5.500C4.800 1 12.200 1 12.200 5.500z" fill="#6e6e6e"/><rect x="1.200" y="5" width="14.600" height="1.800" fill="#6e6e6e"/><path d="M3.800 7.500C3.800 14.500 13.200 14.500 13.200 7.500z" fill="#6e6e6e"/><circle cx="10.300" cy="9.400" r="1.900" fill="#f2f2f2"/><circle cx="10.600" cy="9.400" r="0.700" fill="#6e6e6e"/><path d="M2.500 17.500C2.500 13.500 14.500 13.500 14.500 17.500z" fill="#6e6e6e"/></svg>
<span class="t" style="left:616px;top:965px;line-height:17px;font-size:16px;letter-spacing:0.215px;color:#686868;">ContextNamespaceHandler</span>
<svg style="left:831px;top:968.5px;" width="8" height="12" viewBox="0 0 8 12"><path d="M1 1L5.200 5.400L1 9.800" fill="none" stroke="#a8a8a8" stroke-width="1.200"/></svg>
<span class="t" style="left:848px;top:965px;line-height:17px;font-size:16px;letter-spacing:0.398px;color:#686868;">init()</span>
</div>
</body></html>
